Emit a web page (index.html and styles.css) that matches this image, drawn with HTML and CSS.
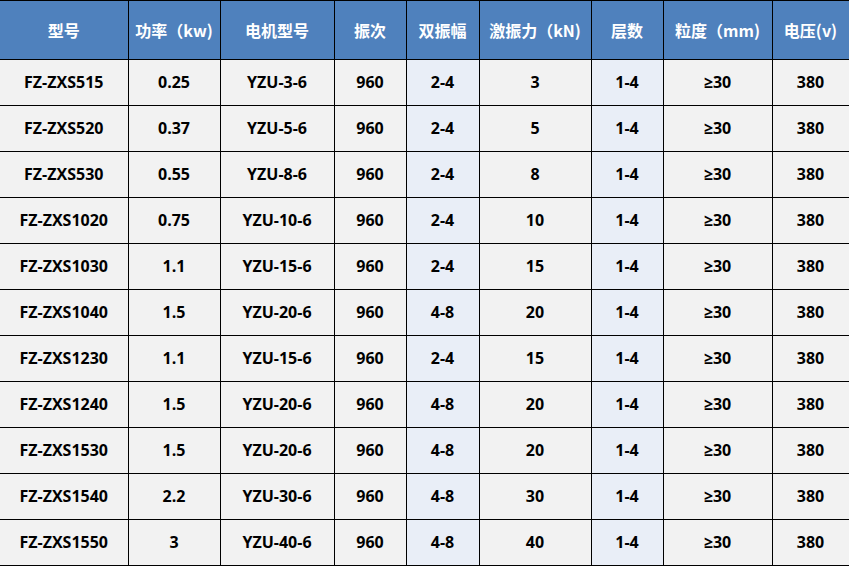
FILE: index.html
```html
<!DOCTYPE html>
<html lang="zh-CN">
<head>
<meta charset="utf-8">
<title>振动筛参数</title>
<link rel="stylesheet" href="styles.css">
</head>
<body>
<table class="spec">
  <colgroup>
    <col class="c1"><col class="c2"><col class="c3"><col class="c4"><col class="c5 hl"><col class="c6"><col class="c7 hl"><col class="c8"><col class="c9">
  </colgroup>
  <thead>
    <tr>
      <th>型号</th><th>功率（kw)</th><th>电机型号</th><th>振次</th><th>双振幅</th><th>激振力（kN)</th><th>层数</th><th>粒度（mm)</th><th>电压(v)</th>
    </tr>
  </thead>
  <tbody>
    <tr><td>FZ-ZXS515</td><td>0.25</td><td>YZU-3-6</td><td>960</td><td class="hl">2-4</td><td>3</td><td class="hl">1-4</td><td>≥30</td><td>380</td></tr>
    <tr><td>FZ-ZXS520</td><td>0.37</td><td>YZU-5-6</td><td>960</td><td class="hl">2-4</td><td>5</td><td class="hl">1-4</td><td>≥30</td><td>380</td></tr>
    <tr><td>FZ-ZXS530</td><td>0.55</td><td>YZU-8-6</td><td>960</td><td class="hl">2-4</td><td>8</td><td class="hl">1-4</td><td>≥30</td><td>380</td></tr>
    <tr><td>FZ-ZXS1020</td><td>0.75</td><td>YZU-10-6</td><td>960</td><td class="hl">2-4</td><td>10</td><td class="hl">1-4</td><td>≥30</td><td>380</td></tr>
    <tr><td>FZ-ZXS1030</td><td>1.1</td><td>YZU-15-6</td><td>960</td><td class="hl">2-4</td><td>15</td><td class="hl">1-4</td><td>≥30</td><td>380</td></tr>
    <tr><td>FZ-ZXS1040</td><td>1.5</td><td>YZU-20-6</td><td>960</td><td class="hl">4-8</td><td>20</td><td class="hl">1-4</td><td>≥30</td><td>380</td></tr>
    <tr><td>FZ-ZXS1230</td><td>1.1</td><td>YZU-15-6</td><td>960</td><td class="hl">2-4</td><td>15</td><td class="hl">1-4</td><td>≥30</td><td>380</td></tr>
    <tr><td>FZ-ZXS1240</td><td>1.5</td><td>YZU-20-6</td><td>960</td><td class="hl">4-8</td><td>20</td><td class="hl">1-4</td><td>≥30</td><td>380</td></tr>
    <tr><td>FZ-ZXS1530</td><td>1.5</td><td>YZU-20-6</td><td>960</td><td class="hl">4-8</td><td>20</td><td class="hl">1-4</td><td>≥30</td><td>380</td></tr>
    <tr><td>FZ-ZXS1540</td><td>2.2</td><td>YZU-30-6</td><td>960</td><td class="hl">4-8</td><td>30</td><td class="hl">1-4</td><td>≥30</td><td>380</td></tr>
    <tr><td>FZ-ZXS1550</td><td>3</td><td>YZU-40-6</td><td>960</td><td class="hl">4-8</td><td>40</td><td class="hl">1-4</td><td>≥30</td><td>380</td></tr>
  </tbody>
</table>
</body>
</html>
```

FILE: styles.css
```css
html, body {
  margin: 0;
  padding: 0;
  background: #ffffff;
}

.spec {
  border-collapse: collapse;
  table-layout: fixed;
  width: 849px;
  font-family: "Open Sans", "Noto Sans CJK SC", sans-serif;
  font-weight: 700;
  font-size: 16px;
  color: #000;
}

.c1 { width: 128px; }
.c2 { width: 92px; }
.c3 { width: 114px; }
.c4 { width: 72px; }
.c5 { width: 73px; }
.c6 { width: 112px; }
.c7 { width: 72px; }
.c8 { width: 109px; }
.c9 { width: 77px; }

.spec th,
.spec td {
  border: 1px solid #000;
  text-align: center;
  padding: 0;
  white-space: nowrap;
}

.spec tr > :first-child {
  border-left: none;
}

.spec th {
  background: #4f81bd;
  color: #ffffff;
  height: 58px;
  font-weight: 700;
  font-family: "Noto Sans CJK SC", "Open Sans", sans-serif;
  font-size: 16px;
}

.spec td {
  background: #f2f2f2;
  height: 44px;
  padding-bottom: 1px;
}

.spec td.hl {
  background: #e9eef7;
}
```
